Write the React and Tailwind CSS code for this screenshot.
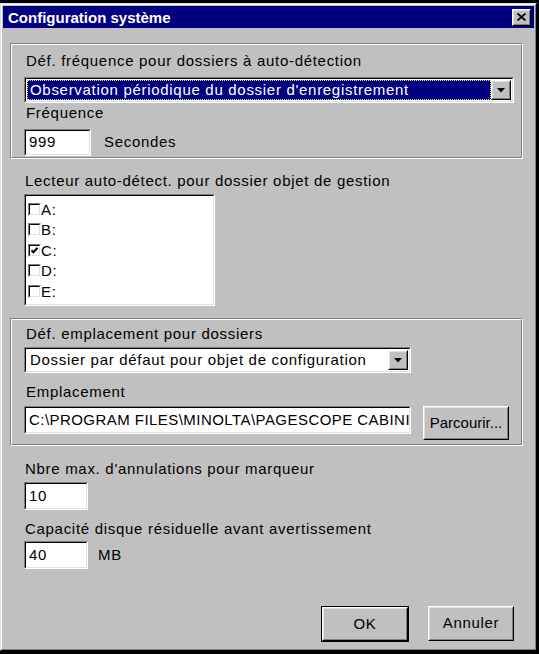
import React from 'react';

const font = { fontFamily: '"Liberation Sans", Arial, sans-serif' };

// classic sunken field (text boxes, combo boxes, list box)
function Sunken({ className = '', innerClassName = '', children }) {
    return (
        <div className={`border border-t-[#808080] border-l-[#808080] border-b-white border-r-white ${className}`}>
            <div className={`h-full border border-t-black border-l-black border-b-[#dfdfdf] border-r-[#dfdfdf] ${innerClassName}`}>
                {children}
            </div>
        </div>
    );
}

// classic raised push button
function Raised({ className = '', innerClassName = '', children }) {
    return (
        <div className={`border border-t-white border-l-white border-b-black border-r-black ${className}`}>
            <div className={`h-full border border-t-[#dfdfdf] border-l-[#dfdfdf] border-b-[#808080] border-r-[#808080] bg-[#c0c0c0] ${innerClassName}`}>
                {children}
            </div>
        </div>
    );
}

// etched group frame
function Group({ className = '', children }) {
    return (
        <div className={`border border-t-[#808080] border-l-[#808080] border-b-white border-r-white ${className}`}>
            <div className="h-full border border-t-white border-l-white border-b-[#808080] border-r-[#808080]">
                {children}
            </div>
        </div>
    );
}

function DropArrow() {
    return (
        <Raised className="w-[20px] h-full shrink-0" innerClassName="flex items-center justify-center">
            <svg width="8" height="5" viewBox="0 0 8 5">
                <path d="M0 0H8L4 4.5Z" fill="#000" />
            </svg>
        </Raised>
    );
}

function Label({ className = '', children }) {
    return <div className={`h-[16px] leading-[16px] text-[15px] tracking-[0.7px] text-black whitespace-nowrap ${className}`}>{children}</div>;
}

function Checkbox({ checked }) {
    return (
        <Sunken className="w-[13px] h-[13px] shrink-0" innerClassName="bg-white relative">
            {checked && (
                <svg className="absolute left-0 top-0" width="9" height="9" viewBox="0 0 9 9">
                    <path d="M1.5 4.2L3.4 6.2L7.6 1.8" stroke="#000" strokeWidth="2" fill="none" />
                </svg>
            )}
        </Sunken>
    );
}

const drives = [
    { name: 'A:', checked: false },
    { name: 'B:', checked: false },
    { name: 'C:', checked: true },
    { name: 'D:', checked: false },
    { name: 'E:', checked: false },
];

const txt = 'text-[15px] tracking-[0.7px] whitespace-nowrap';

export default function App() {
    return (
        <div className="w-[539px] h-[654px] bg-black pt-[3px] pb-[3px] overflow-hidden" style={font}>
            <div className="h-full w-[537px] border border-t-[#dfdfdf] border-l-[#dfdfdf] border-b-black border-r-black">
                <div className="h-full border border-t-white border-l-white border-b-[#808080] border-r-[#808080] bg-[#c0c0c0] p-[1px]">
                    {/* title bar */}
                    <div className="h-[22px] bg-[#000080] flex items-center justify-between pl-[5px] pr-[3px]">
                        <span className="text-white font-bold text-[15px] leading-none">Configuration système</span>
                        <Raised className="w-[19px] h-[17px]" innerClassName="flex items-center justify-center">
                            <svg width="9" height="8" viewBox="0 0 9 8">
                                <path d="M0.5 0.5L8.5 7.5M8.5 0.5L0.5 7.5" stroke="#000" strokeWidth="1.8" />
                            </svg>
                        </Raised>
                    </div>

                    <div className="pl-[7px] pr-[11px]">
                        {/* auto-detection frequency */}
                        <Group className="mt-[15px] h-[116px]">
                            <div className="pl-[12px] pr-[7px] pt-[8px]">
                                <Label className="pl-[2px]">Déf. fréquence pour dossiers à auto-détection</Label>
                                <Sunken className="mt-[8px] h-[26px]" innerClassName="flex bg-white p-[1px]">
                                    <div className={`flex-1 bg-[#000080] border border-dotted border-[#e8e070] flex items-center pl-[2px] text-white ${txt}`}>
                                        Observation périodique du dossier d'enregistrement
                                    </div>
                                    <DropArrow />
                                </Sunken>
                                <Label className="mt-[2px] pl-[2px]">Fréquence</Label>
                                <div className="mt-[8px] flex items-center gap-[13px]">
                                    <Sunken className="w-[67px] h-[27px]" innerClassName={`bg-white flex items-center pl-[3px] ${txt}`}>
                                        999
                                    </Sunken>
                                    <span className={txt}>Secondes</span>
                                </div>
                            </div>
                        </Group>

                        {/* drive list */}
                        <div className="pl-[14px]">
                            <Label className="mt-[14px] pl-[1px]">Lecteur auto-détect. pour dossier objet de gestion</Label>
                            <Sunken className="mt-[5px] w-[191px] h-[112px]" innerClassName="bg-white pt-[3px] pl-[2px]">
                                {drives.map((d) => (
                                    <div key={d.name} className="h-[20.5px] flex items-center">
                                        <Checkbox checked={d.checked} />
                                        <span className={`${txt} leading-none`}>{d.name}</span>
                                    </div>
                                ))}
                            </Sunken>
                        </div>

                        {/* folder location */}
                        <Group className="mt-[12px] h-[128px]">
                            <div className="pl-[12px] pr-[7px] pt-[6px]">
                                <Label className="pl-[2px]">Déf. emplacement pour dossiers</Label>
                                <Sunken className="mt-[5px] w-[387px] h-[26px]" innerClassName="flex bg-white p-[1px]">
                                    <div className={`flex-1 flex items-center pl-[3px] ${txt}`}>
                                        Dossier par défaut pour objet de configuration
                                    </div>
                                    <DropArrow />
                                </Sunken>
                                <Label className="mt-[11px] pl-[2px]">Emplacement</Label>
                                <div className="mt-[6px] flex items-start gap-[12px]">
                                    <Sunken className="w-[387px] h-[28px]" innerClassName="bg-white flex items-center pl-[3px] overflow-hidden text-[15px] tracking-[0.45px] whitespace-nowrap">
                                        C:\PROGRAM FILES\MINOLTA\PAGESCOPE CABINI
                                    </Sunken>
                                    <Raised className="w-[86px] h-[34px]" innerClassName="flex items-center justify-center text-[15px] whitespace-nowrap">
                                        Parcourir...
                                    </Raised>
                                </div>
                            </div>
                        </Group>

                        {/* undo and disk settings */}
                        <div className="pl-[14px]">
                            <Label className="mt-[15px] pl-[1px]">Nbre max. d'annulations pour marqueur</Label>
                            <Sunken className="mt-[5px] w-[64px] h-[28px]" innerClassName={`bg-white flex items-center pl-[3px] ${txt}`}>
                                10
                            </Sunken>
                            <Label className="mt-[11px] pl-[1px]">Capacité disque résiduelle avant avertissement</Label>
                            <div className="mt-[4px] flex items-center gap-[10px]">
                                <Sunken className="w-[64px] h-[28px]" innerClassName={`bg-white flex items-center pl-[3px] ${txt}`}>
                                    40
                                </Sunken>
                                <span className={txt}>MB</span>
                            </div>
                        </div>

                        <div className="mt-[37px] flex justify-end gap-[19px] pr-[9px]">
                            <div className="border border-black">
                                <Raised className="w-[86px] h-[34px]" innerClassName={`flex items-center justify-center ${txt}`}>
                                    OK
                                </Raised>
                            </div>
                            <Raised className="w-[86px] h-[35px]" innerClassName={`flex items-center justify-center ${txt}`}>
                                Annuler
                            </Raised>
                        </div>
                    </div>
                </div>
            </div>
        </div>
    );
}
